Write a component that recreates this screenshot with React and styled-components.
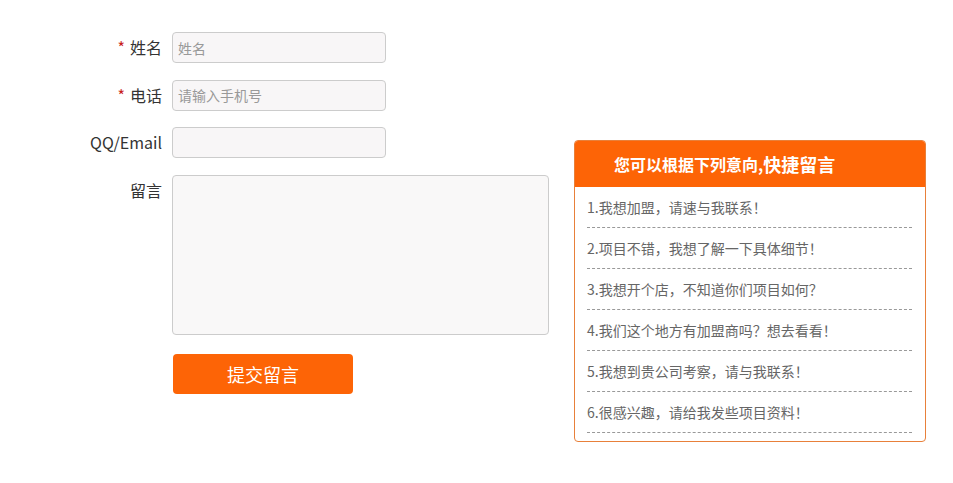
import React from "react";
import styled, { createGlobalStyle } from "styled-components";

const Global = createGlobalStyle`
  html, body { margin: 0; padding: 0; background: #fff; }
  body { font-family: "Noto Sans CJK SC", "Noto Sans", sans-serif; color: #333; }
  * { box-sizing: border-box; }
`;

const Page = styled.div`
  display: flex;
  align-items: flex-start;
  padding: 32px 0 0 80px;
  gap: 25px;
`;

const Form = styled.form`
  display: grid;
  grid-template-columns: 82px 377px;
  column-gap: 10px;
  row-gap: 16.5px;
  align-items: center;
  margin: 0;
`;

const Label = styled.label`
  justify-self: end;
  font-size: 16px;
  line-height: 31px;
  color: #333;
  white-space: nowrap;
  align-self: ${(p) => (p.$top ? "start" : "center")};
`;

const Star = styled.span`
  color: #c81d1d;
  margin-right: 5px;
`;

const Input = styled.input`
  width: 214px;
  height: 31px;
  border: 1px solid #cccccc;
  border-radius: 4px;
  background: #f8f6f7;
  padding: 0 5px;
  font-family: inherit;
  font-size: 14px;
  color: #333;
  outline: none;
  &::placeholder { color: #999; }
`;

const Textarea = styled.textarea`
  width: 377px;
  height: 160px;
  border: 1px solid #cccccc;
  border-radius: 4px;
  background: #f9f8f8;
  resize: none;
  outline: none;
  font-family: inherit;
  margin: 0;
  display: block;
`;

const Submit = styled.button`
  grid-column: 2;
  margin: 3px 0 0 1px;
  width: 180px;
  height: 40px;
  border: none;
  border-radius: 4px;
  background: #fd6406;
  color: #fff;
  font-family: inherit;
  font-size: 18px;
  cursor: pointer;
`;

const Panel = styled.div`
  margin-top: 108px;
  width: 352px;
  border: 1px solid #e8803a;
  border-radius: 4px;
  overflow: hidden;
`;

const Header = styled.div`
  height: 47px;
  background: #fd6406;
  color: #fff;
  font-weight: bold;
  display: flex;
  align-items: center;
  padding-left: 40px;
  margin: -1px -1px 0;
`;

const Small = styled.span`
  font-size: 16px;
`;
const Big = styled.span`
  font-size: 18px;
`;

const List = styled.ul`
  list-style: none;
  margin: 0;
  padding: 0 13px 8px 12px;
`;

const Item = styled.li`
  height: 41px;
  line-height: 40px;
  border-bottom: 1px dashed #999;
  font-size: 14px;
  color: #666;
  cursor: pointer;
`;

const items = [
  "1.我想加盟，请速与我联系！",
  "2.项目不错，我想了解一下具体细节！",
  "3.我想开个店，不知道你们项目如何？",
  "4.我们这个地方有加盟商吗？想去看看！",
  "5.我想到贵公司考察，请与我联系！",
  "6.很感兴趣，请给我发些项目资料！",
];

export default function App() {
  return (
    <>
      <Global />
      <Page>
        <Form onSubmit={(e) => e.preventDefault()}>
          <Label><Star>*</Star>姓名</Label>
          <Input placeholder="姓名" />
          <Label><Star>*</Star>电话</Label>
          <Input placeholder="请输入手机号" />
          <Label>QQ/Email</Label>
          <Input />
          <Label $top>留言</Label>
          <Textarea />
          <Submit type="submit">提交留言</Submit>
        </Form>
        <Panel>
          <Header>
            <Small>您可以根据下列意向,</Small>
            <Big>快捷留言</Big>
          </Header>
          <List>
            {items.map((t) => (
              <Item key={t}>{t}</Item>
            ))}
          </List>
        </Panel>
      </Page>
    </>
  );
}
